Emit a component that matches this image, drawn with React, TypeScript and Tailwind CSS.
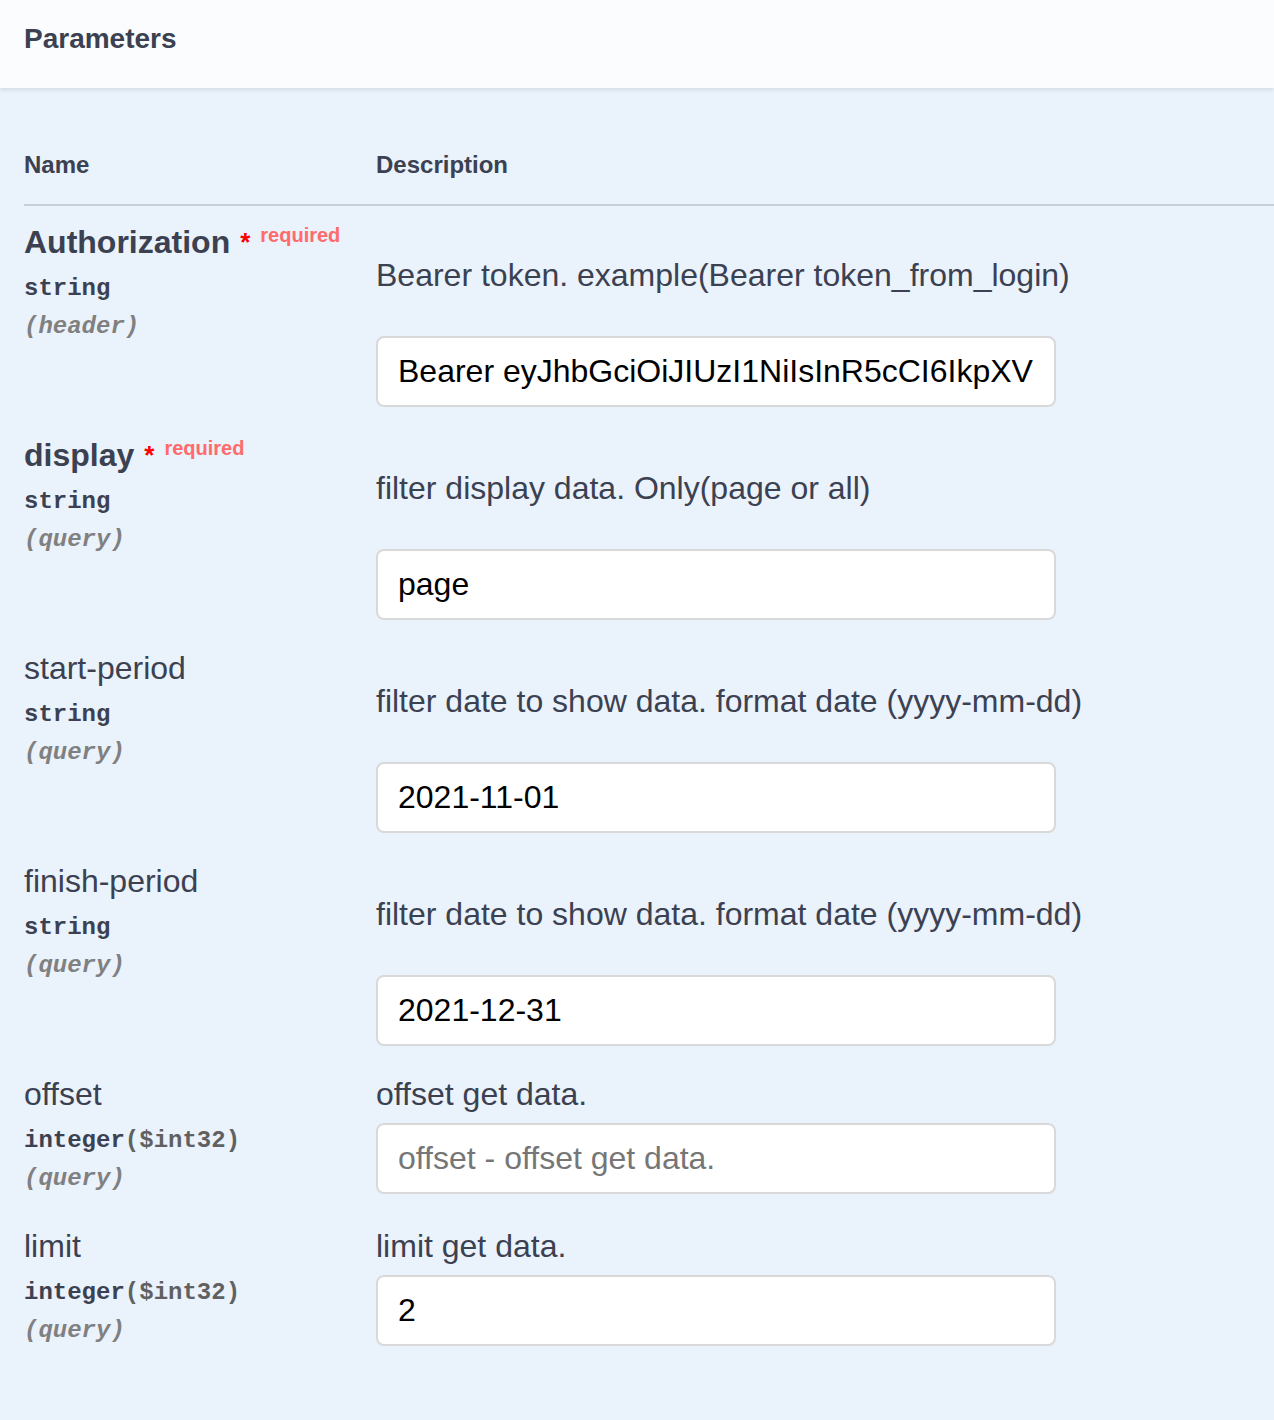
import React from "react"

type Param = {
  name: string
  required?: boolean
  type: string
  format?: string
  location: string
  description: string
  value?: string
  placeholder?: string
  markdown: boolean
}

const params: Param[] = [
  {
    name: "Authorization",
    required: true,
    type: "string",
    location: "header",
    description: "Bearer token. example(Bearer token_from_login)",
    value: "Bearer eyJhbGciOiJIUzI1NiIsInR5cCI6IkpXVCJ9",
    markdown: true,
  },
  {
    name: "display",
    required: true,
    type: "string",
    location: "query",
    description: "filter display data. Only(page or all)",
    value: "page",
    markdown: true,
  },
  {
    name: "start-period",
    type: "string",
    location: "query",
    description: "filter date to show data. format date (yyyy-mm-dd)",
    value: "2021-11-01",
    markdown: true,
  },
  {
    name: "finish-period",
    type: "string",
    location: "query",
    description: "filter date to show data. format date (yyyy-mm-dd)",
    value: "2021-12-31",
    markdown: true,
  },
  {
    name: "offset",
    type: "integer",
    format: "$int32",
    location: "query",
    description: "offset get data.",
    placeholder: "offset - offset get data.",
    markdown: false,
  },
  {
    name: "limit",
    type: "integer",
    format: "$int32",
    location: "query",
    description: "limit get data.",
    value: "2",
    markdown: false,
  },
]

const sans = "font-['Liberation_Sans',Arial,sans-serif]"
const mono = "font-['Liberation_Mono','Courier_New',monospace]"

function ParamRow({ p }: { p: Param }) {
  return (
    <div className={`flex pt-4 ${p.markdown ? "pb-[12px]" : "pb-[15px]"}`}>
      <div className="w-[352px] shrink-0">
        <div className="flex h-10 items-center">
          <span
            className={`text-[32px] leading-10 text-[#3b4151] ${p.required ? "font-bold" : "font-normal"}`}
          >
            {p.name}
          </span>
          {p.required && (
            <span className="ml-[10px] flex items-start">
              <span className="text-[26px] font-bold leading-none text-[#ff0000]">*</span>
              <span className="ml-[10px] -translate-y-[4px] text-[20px] font-bold leading-none text-[#ff6b6b]">
                required
              </span>
            </span>
          )}
        </div>
        <div className={`${mono} mt-[11px] text-[24px] font-bold leading-8 text-[#3b4151]`}>
          {p.type}
          {p.format && <span className="text-[#606060]">({p.format})</span>}
        </div>
        <div className={`${mono} mt-[6px] text-[24px] font-bold italic leading-8 text-[#808080]`}>
          ({p.location})
        </div>
      </div>
      <div className="flex-1">
        <p
          className={`text-[32px] leading-10 text-[#3b4151] ${p.markdown ? "mt-[33px] mb-[41px]" : "mb-[9px]"}`}
        >
          {p.description}
        </p>
        <input
          readOnly
          value={p.value ?? ""}
          placeholder={p.placeholder}
          className={`${sans} block h-[71px] w-[680px] rounded-lg border-2 border-[#d9d9d9] bg-white px-5 text-[32px] text-black outline-none placeholder:text-[#767676]`}
        />
      </div>
    </div>
  )
}

export default function App() {
  return (
    <div className={`${sans} min-h-[1420px] w-full overflow-hidden bg-[#eaf2fb]`}>
      <div className="relative z-10 flex h-[88px] items-start bg-[#fafcfe] pl-6 pt-[21px] shadow-[0_2px_4px_rgba(0,0,0,0.1)]">
        <h4 className="text-[28px] font-bold leading-9 text-[#3b4151]">Parameters</h4>
      </div>
      <div className="pl-6 pt-[61px]">
        <div className="flex border-b-2 border-[#c8ced7] pb-[23px] text-[24px] font-bold leading-8 text-[#3b4151]">
          <div className="w-[352px] shrink-0">Name</div>
          <div>Description</div>
        </div>
        {params.map((p) => (
          <ParamRow key={p.name} p={p} />
        ))}
      </div>
    </div>
  )
}
